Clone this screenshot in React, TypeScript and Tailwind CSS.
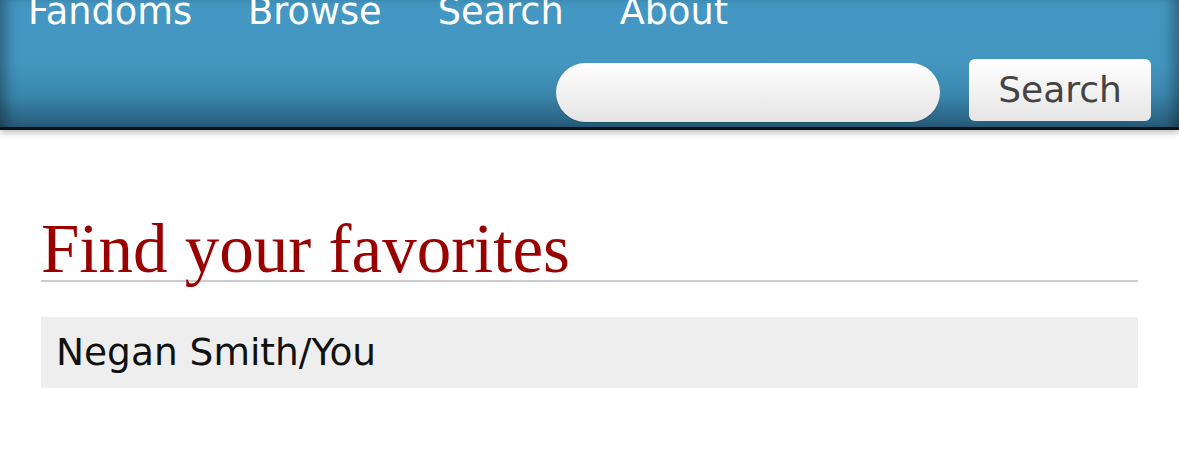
import React from 'react';

const navItems = ['Fandoms', 'Browse', 'Search', 'About'];

const App: React.FC = () => {
  return (
    <div className="min-h-[461px] bg-white" style={{ fontFamily: '"DejaVu Sans", Verdana, sans-serif' }}>
      {/* Header */}
      <div className="relative h-[130px] overflow-hidden border-b-[3px] border-[#111] bg-gradient-to-b from-[#4497c2] via-[#4396c0] to-[#33769a] shadow-[0_3px_6px_rgba(0,0,0,0.25)]">
        <div className="pointer-events-none absolute inset-0 bg-gradient-to-b from-transparent from-75% to-[rgba(20,50,70,0.35)]" />
        <div className="pointer-events-none absolute inset-0 shadow-[inset_14px_0_14px_-8px_rgba(0,0,0,0.35),inset_-14px_0_14px_-8px_rgba(0,0,0,0.35)]" />
        <div className="relative flex gap-[56px] pl-[28px] -mt-[10px] text-[36.7px] leading-[44px] text-white">
          {navItems.map(item => (
            <span key={item}>{item}</span>
          ))}
        </div>
        <div className="relative mt-[25px] flex items-end justify-end gap-[29px] pr-[28px]">
          <div className="h-[59px] w-[384px] rounded-full bg-gradient-to-b from-white to-[#e4e4e4] shadow-[0_1px_1px_rgba(0,0,0,0.2)]" />
          <button className="mb-[1px] h-[62px] w-[182px] rounded-[6px] bg-gradient-to-b from-white to-[#e6e6e6] text-[36px] text-[#444]">
            Search
          </button>
        </div>
      </div>

      {/* Content */}
      <div className="px-[41px] pt-[88px]">
        <h2
          className="border-b-2 border-[#ccc] text-[69px] leading-[62px] text-[#990000]"
          style={{ fontFamily: 'Georgia, "Liberation Serif", serif' }}
        >
          Find your favorites
        </h2>
        <div className="mt-[35px] bg-[#eeeeee] px-[15px] h-[71px] flex items-center text-[37.5px] text-[#111]">
          Negan Smith/You
        </div>
      </div>
    </div>
  );
};

export default App;
